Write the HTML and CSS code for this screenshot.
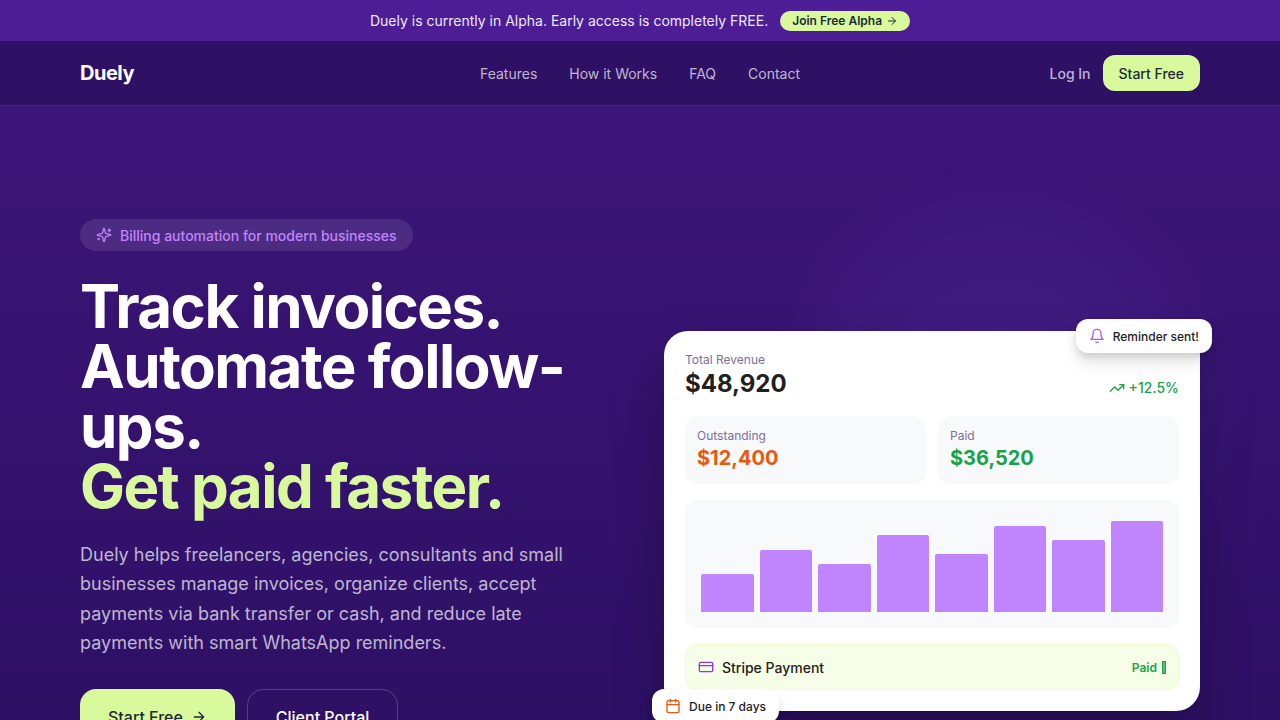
FILE: index.html
```html
<!DOCTYPE html>
<html lang="en">
<head>
    <meta charset="UTF-8">
    <meta name="viewport" content="width=device-width, initial-scale=1.0">
    <title>Duely - Billing automation</title>
    <link rel="stylesheet" href="styles.css">
</head>
<body>
<div class="page">

    <div class="banner">
        <span>Duely is currently in Alpha. Early access is completely FREE.</span>
        <a class="banner-btn" href="#">Join Free Alpha
            <svg width="12" height="12" viewBox="0 0 24 24" class="icon"><path d="M5 12h14M12 5l7 7-7 7"/></svg>
        </a>
    </div>

    <header class="navbar">
        <a class="logo" href="#">Duely</a>
        <nav class="nav-links">
            <a href="#">Features</a>
            <a href="#">How it Works</a>
            <a href="#">FAQ</a>
            <a href="#">Contact</a>
        </nav>
        <div class="nav-actions">
            <a class="login" href="#">Log In</a>
            <a class="nav-cta" href="#">Start Free</a>
        </div>
    </header>

    <section class="hero">
        <div class="hero-glow"></div>
        <div class="hero-grid">
            <div class="hero-left">
                <div class="pill">
                    <svg width="16" height="16" viewBox="0 0 24 24" class="icon"><path d="M9.94 15.5a2 2 0 0 0-1.44-1.44l-6.14-1.58a.5.5 0 0 1 0-.96l6.14-1.59a2 2 0 0 0 1.44-1.43l1.58-6.14a.5.5 0 0 1 .96 0l1.59 6.14a2 2 0 0 0 1.43 1.43l6.14 1.58a.5.5 0 0 1 0 .97l-6.14 1.58a2 2 0 0 0-1.43 1.44l-1.59 6.14a.5.5 0 0 1-.96 0z"/><path d="M20 3v4M22 5h-4M4 17v2M5 18H3"/></svg>
                    <span>Billing automation for modern businesses</span>
                </div>
                <h1>Track invoices.<br>Automate follow-ups.<br><span class="lime">Get paid faster.</span></h1>
                <p class="lead">Duely helps freelancers, agencies, consultants and small businesses manage invoices, organize clients, accept payments via bank transfer or cash, and reduce late payments with smart WhatsApp reminders.</p>
                <div class="hero-buttons">
                    <a class="btn btn-lime" href="#">Start Free
                        <svg width="16" height="16" viewBox="0 0 24 24" class="icon"><path d="M5 12h14M12 5l7 7-7 7"/></svg>
                    </a>
                    <a class="btn btn-outline" href="#">Client Portal</a>
                </div>
            </div>

            <div class="hero-right">
                <div class="dash-card">
                    <div class="dash-top">
                        <div>
                            <div class="small-label">Total Revenue</div>
                            <div class="total">$48,920</div>
                        </div>
                        <div class="trend">
                            <svg width="16" height="16" viewBox="0 0 24 24" class="icon"><path d="M22 7l-8.5 8.5-5-5L2 17"/><path d="M16 7h6v6"/></svg>
                            +12.5%
                        </div>
                    </div>
                    <div class="tiles">
                        <div class="tile">
                            <div class="small-label">Outstanding</div>
                            <div class="amount orange">$12,400</div>
                        </div>
                        <div class="tile">
                            <div class="small-label">Paid</div>
                            <div class="amount green">$36,520</div>
                        </div>
                    </div>
                    <div class="chart">
                        <div class="bar" style="height: 40%"></div>
                        <div class="bar" style="height: 65%"></div>
                        <div class="bar" style="height: 50%"></div>
                        <div class="bar" style="height: 80%"></div>
                        <div class="bar" style="height: 60%"></div>
                        <div class="bar" style="height: 90%"></div>
                        <div class="bar" style="height: 75%"></div>
                        <div class="bar" style="height: 95%"></div>
                    </div>
                    <div class="payment">
                        <div class="payment-name">
                            <svg width="16" height="16" viewBox="0 0 24 24" class="icon"><rect x="2" y="5" width="20" height="14" rx="2"/><path d="M2 10h20"/></svg>
                            Stripe Payment
                        </div>
                        <div class="payment-status">Paid <span class="tofu"></span></div>
                    </div>
                </div>

                <div class="toast toast-reminder">
                    <svg width="16" height="16" viewBox="0 0 24 24" class="icon"><path d="M6 8a6 6 0 0 1 12 0c0 7 3 9 3 9H3s3-2 3-9"/><path d="M10.3 21a1.94 1.94 0 0 0 3.4 0"/></svg>
                    Reminder sent!
                </div>
                <div class="toast toast-due">
                    <svg width="16" height="16" viewBox="0 0 24 24" class="icon"><rect x="3" y="4" width="18" height="18" rx="2"/><path d="M16 2v4M8 2v4M3 10h18"/></svg>
                    Due in 7 days
                </div>
            </div>
        </div>
    </section>

</div>
</body>
</html>
```
FILE: styles.css
```css
* {
    box-sizing: border-box;
}

html, body {
    margin: 0;
    padding: 0;
    height: 100%;
    overflow: hidden;
}

body {
    font-family: Inter, "Liberation Sans", sans-serif;
    background-color: #2e1065;
}

a {
    text-decoration: none;
    color: inherit;
}

.icon {
    fill: none;
    stroke: currentColor;
    stroke-width: 2;
    stroke-linecap: round;
    stroke-linejoin: round;
    flex-shrink: 0;
}

.page {
    height: 720px;
    overflow: hidden;
}

/* Top banner */
.banner {
    height: 41px;
    background: #4c1d95;
    color: #ede9fe;
    font-size: 14px;
    display: flex;
    align-items: center;
    justify-content: center;
    gap: 12px;
}

.banner-btn {
    display: flex;
    align-items: center;
    gap: 4px;
    height: 20px;
    padding: 0 12px;
    background: #d9f99d;
    color: #1f2937;
    border-radius: 999px;
    font-size: 12px;
    font-weight: 600;
}

/* Navbar */
.navbar {
    height: 65px;
    padding: 0 80px;
    background: #2e1065;
    border-bottom: 1px solid rgba(255, 255, 255, 0.1);
    display: grid;
    grid-template-columns: 1fr auto 1fr;
    align-items: center;
}

.logo {
    color: #fff;
    font-size: 20px;
    font-weight: 700;
    letter-spacing: -0.5px;
}

.nav-links {
    display: flex;
    gap: 32px;
    font-size: 14px;
    color: rgba(255, 255, 255, 0.7);
}

.nav-actions {
    display: flex;
    justify-content: flex-end;
    align-items: center;
    gap: 12px;
    font-size: 14px;
    font-weight: 500;
}

.login {
    color: rgba(255, 255, 255, 0.7);
}

.nav-cta {
    height: 36px;
    padding: 0 16px;
    display: flex;
    align-items: center;
    background: #d9f99d;
    color: #1f2937;
    border-radius: 12px;
}

/* Hero */
.hero {
    position: relative;
    height: 615px;
    padding: 0 80px;
    background: linear-gradient(180deg, #3b1578 0%, #2e1065 100%);
    overflow: hidden;
}

.hero-glow {
    position: absolute;
    left: 760px;
    top: 60px;
    width: 480px;
    height: 480px;
    border-radius: 50%;
    background: radial-gradient(circle, rgba(139, 92, 246, 0.14) 0%, rgba(139, 92, 246, 0.07) 50%, rgba(139, 92, 246, 0) 72%);
}

.hero-grid {
    position: relative;
    display: grid;
    grid-template-columns: 1fr 1fr;
    gap: 48px;
}

.hero-left {
    padding-top: 113px;
}

.pill {
    display: inline-flex;
    align-items: center;
    gap: 8px;
    height: 32px;
    padding: 0 16px;
    border-radius: 999px;
    background: rgba(255, 255, 255, 0.1);
    color: #c084fc;
    font-size: 14px;
    font-weight: 500;
}

h1 {
    margin: 25px 0 0;
    color: #fff;
    font-size: 60px;
    line-height: 60px;
    font-weight: 700;
    letter-spacing: -1.5px;
}

.lime {
    color: #d9f99d;
}

.lead {
    margin: 24px 0 0;
    max-width: 512px;
    color: rgba(255, 255, 255, 0.7);
    font-size: 18px;
    line-height: 29.25px;
}

.hero-buttons {
    display: flex;
    gap: 12px;
    margin-top: 32px;
}

.btn {
    height: 56px;
    padding: 0 28px;
    border-radius: 16px;
    display: flex;
    align-items: center;
    gap: 8px;
    font-size: 16px;
    font-weight: 500;
}

.btn-lime {
    background: #d9f99d;
    color: #1f2937;
}

.btn-outline {
    border: 1px solid rgba(255, 255, 255, 0.2);
    color: #fff;
}

/* Dashboard card */
.hero-right {
    position: relative;
    padding-top: 225px;
}

.dash-card {
    background: #fff;
    border-radius: 24px;
    padding: 21px;
    height: 380px;
    box-shadow: 0 25px 50px rgba(0, 0, 0, 0.25);
}

.dash-top {
    display: flex;
    justify-content: space-between;
    align-items: flex-end;
}

.small-label {
    color: #7c6f9b;
    font-size: 12px;
    line-height: 16px;
}

.total {
    color: #1f2120;
    font-size: 24px;
    line-height: 32px;
    font-weight: 700;
}

.trend {
    display: flex;
    align-items: center;
    gap: 4px;
    padding-bottom: 4px;
    color: #16a34a;
    font-size: 14px;
    font-weight: 500;
}

.tiles {
    display: grid;
    grid-template-columns: 1fr 1fr;
    gap: 12px;
    margin-top: 16px;
}

.tile {
    height: 68px;
    padding: 12px;
    background: #f8f9fb;
    border-radius: 12px;
}

.amount {
    font-size: 20px;
    line-height: 28px;
    font-weight: 700;
}

.orange {
    color: #ea580c;
}

.green {
    color: #16a34a;
}

.chart {
    height: 128px;
    margin-top: 16px;
    padding: 16px;
    background: #f8f9fb;
    border-radius: 12px;
    display: flex;
    align-items: flex-end;
    gap: 6px;
}

.bar {
    flex: 1;
    background: #c084fc;
    border-radius: 2px 2px 0 0;
}

.payment {
    height: 46px;
    margin-top: 16px;
    padding: 0 12px;
    background: #f7fee7;
    border: 1px solid #ecfccb;
    border-radius: 12px;
    display: flex;
    align-items: center;
    justify-content: space-between;
}

.payment-name {
    display: flex;
    align-items: center;
    gap: 8px;
    color: #1f2120;
    font-size: 14px;
    font-weight: 500;
}

.payment-name .icon {
    color: #9333ea;
}

.payment-status {
    display: flex;
    align-items: center;
    gap: 5px;
    color: #16a34a;
    font-size: 12px;
    font-weight: 600;
}

.tofu {
    width: 4px;
    height: 13px;
    background: #5fb97e;
    border: 1px solid #16a34a;
}

/* Floating toasts */
.toast {
    position: absolute;
    height: 34px;
    padding: 0 13px;
    display: flex;
    align-items: center;
    gap: 8px;
    background: #fff;
    border-radius: 12px;
    color: #1f2120;
    font-size: 12px;
    font-weight: 500;
    box-shadow: 0 10px 15px rgba(0, 0, 0, 0.1), 0 4px 6px rgba(0, 0, 0, 0.1);
}

.toast-reminder {
    top: 213px;
    right: -12px;
}

.toast-reminder .icon {
    color: #a855f7;
}

.toast-due {
    top: 583px;
    left: -12px;
}

.toast-due .icon {
    color: #ea580c;
}
```
